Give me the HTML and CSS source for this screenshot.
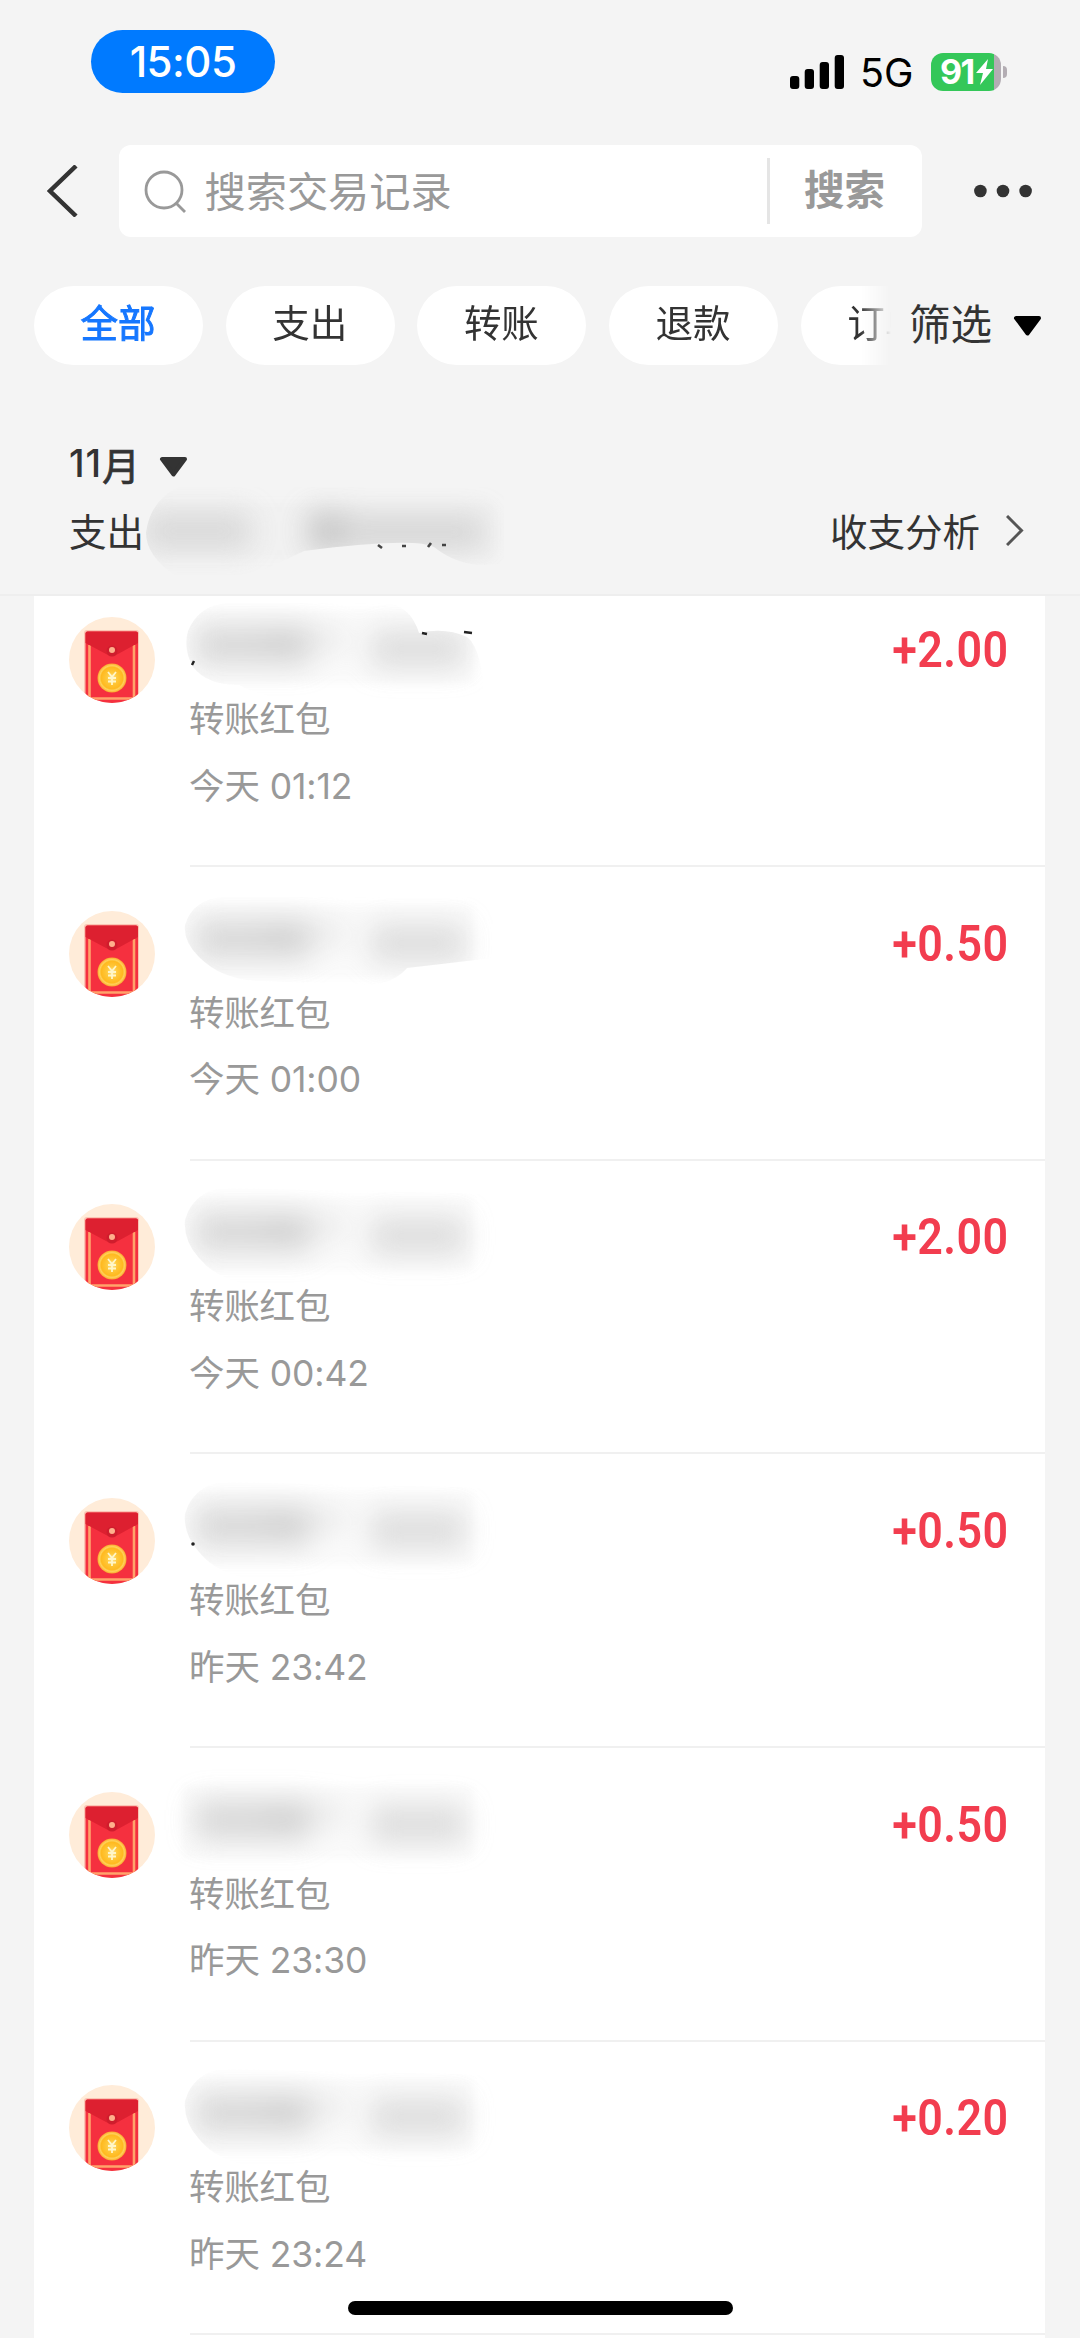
FILE: index.html
```html
<!DOCTYPE html>
<html lang="zh-CN">
<head>
<meta charset="utf-8">
<title>账单</title>
<link rel="stylesheet" href="styles.css">
</head>
<body>
<svg class="defs" width="0" height="0">
  <defs>
    <filter id="smear" x="-20%" y="-80%" width="140%" height="260%"><feGaussianBlur stdDeviation="14"/></filter>
    <filter id="soft" x="-20%" y="-60%" width="140%" height="220%"><feGaussianBlur stdDeviation="5"/></filter>
    <radialGradient id="coin"><stop offset="0" stop-color="#ffe9a0"/><stop offset=".35" stop-color="#ffc93c"/><stop offset=".75" stop-color="#ffb91f"/><stop offset=".85" stop-color="#ffd25a"/><stop offset="1" stop-color="#fba92c"/></radialGradient>
    <clipPath id="disc"><circle cx="43" cy="43" r="43"/></clipPath>
    <clipPath id="mask-a"><path d="M44 16L205 16Q228 20 236 46Q262 40 284 50Q300 62 302 120L150 118Q90 116 56 98Q24 98 10 80Q0 62 5 44Q16 18 44 16Z"/></clipPath>
    <clipPath id="mask-b"><path d="M40 16H310V77L224 87Q210 104 180 104L80 100Q40 100 16 76Q0 60 2 44Q10 18 40 16Z"/></clipPath>
    <clipPath id="mask-c"><path d="M40 14L320 20V112H70Q34 106 16 84Q0 66 2 46Q10 18 40 14Z"/></clipPath>
    <clipPath id="mask-total"><path d="M34 8H360V84Q320 92 290 68Q270 58 160 72L110 96H30Q2 76 2 54Q6 22 34 8Z"/></clipPath>
    <symbol id="packet" viewBox="0 0 86 86">
      <g clip-path="url(#disc)">
        <rect width="86" height="86" fill="#ffecd9"/>
        <rect x="15" y="13" width="55" height="76" rx="3" fill="#fbc5b4"/>
        <rect x="16.500" y="14.500" width="52.500" height="76" rx="2" fill="#f5303f"/>
        <path d="M20.500 28V80M65 28V80M20 81.500H66" stroke="#ffa36b" stroke-width="2.600" fill="none"/>
        <path d="M16.500 16.500q0-2 2-2H67q2 0 2 2V26L49 37q-6 4-12 0L16.500 26Z" fill="#dd2030"/>
        <circle cx="43" cy="34" r="5.500" fill="#cf1d2d"/>
        <circle cx="43" cy="33" r="3" fill="#ffb08c"/>
        <circle cx="43" cy="61" r="14.500" fill="url(#coin)"/>
        <path d="M39 55l4 5 4-5M43 60v8M39 61h8M39 64.500h8" stroke="#fff6c9" stroke-width="1.800" fill="none"/>
      </g>
    </symbol>
    <symbol id="caret" viewBox="0 0 29 20"><path d="M3 2H26L14.500 17.500Z" stroke-width="4" stroke-linejoin="round" stroke="currentColor" fill="currentColor"/></symbol>
    <g id="smudge">
      <rect x="0" y="24" width="290" height="72" fill="#fafafa" filter="url(#soft)"/>
      <g filter="url(#smear)" opacity=".75"><rect x="12" y="38" width="116" height="40" fill="#cfcfcf"/><rect x="80" y="44" width="40" height="22" fill="#c4c4c4"/><rect x="128" y="42" width="34" height="20" fill="#e2e2e2"/><rect x="188" y="43" width="94" height="38" fill="#d5d5d5"/></g>
    </g>
  </defs>
</svg>

<header class="status">
  <span class="clock">15:05</span>
  <div class="indicators">
    <svg class="signal" viewBox="0 0 54 34"><rect y="21" width="9.300" height="13" rx="3"/><rect x="14.700" y="14" width="9.300" height="20" rx="3"/><rect x="29.700" y="7" width="9.300" height="27" rx="3"/><rect x="44.700" width="9.300" height="34" rx="3"/></svg>
    <span class="network">5G</span>
    <div class="battery"><span class="level">91</span><svg class="bolt" viewBox="0 0 17 26"><path d="M12 0L0 14H7L4 26L17 10H10Z" fill="#fff"/></svg></div>
    <span class="nub"></span>
  </div>
</header>

<nav class="topbar">
  <svg class="back" viewBox="0 0 31 52"><path d="M29 1L3 26L29 51" fill="none" stroke="#333" stroke-width="4.500"/></svg>
  <div class="search">
    <svg class="lens" viewBox="0 0 43 43"><circle cx="20" cy="20" r="18" /><path d="M32 33L41 42"/></svg>
    <span class="placeholder">搜索交易记录</span>
    <span class="submit">搜索</span>
  </div>
  <svg class="more" viewBox="0 0 58 14"><circle cx="6.400" cy="7" r="6.300"/><circle cx="29" cy="7" r="6.300"/><circle cx="51.600" cy="7" r="6.300"/></svg>
</nav>

<section class="tabs">
  <div class="chips">
    <span class="chip active">全部</span><span class="chip">支出</span><span class="chip">转账</span><span class="chip">退款</span><span class="chip">订单</span>
  </div>
  <div class="filter">筛选<svg class="caret"><use href="#caret"/></svg></div>
</section>

<section class="summary">
  <div class="month">11<span class="unit">月</span><svg class="caret"><use href="#caret"/></svg></div>
  <div class="totals">
    <span>支出</span>
    <svg class="hidden-total" viewBox="0 0 360 100">
      <g clip-path="url(#mask-total)">
        <rect x="-10" y="24" width="360" height="56" fill="#f1f1f1" filter="url(#soft)"/>
        <g filter="url(#smear)" opacity=".7"><rect x="0" y="34" width="106" height="36" fill="#cfcfcf"/><rect x="164" y="32" width="38" height="40" fill="#b8b8b8"/><rect x="200" y="36" width="140" height="34" fill="#cbcbcb"/></g>
      </g>
      <path d="M234 66l4 3M258 67h4M284 68l3-4M298 66h4" stroke="#444" stroke-width="2.600"/>
    </svg>
    <span class="analysis">收支分析</span>
    <svg class="chevron" viewBox="0 0 18 31"><path d="M1 1L15.500 15.500L1 30" fill="none" stroke="#555" stroke-width="3"/></svg>
  </div>
</section>

<main class="list">
  <article class="row"><svg class="avatar"><use href="#packet"/></svg><div class="detail"><svg class="name" viewBox="0 0 320 120"><g clip-path="url(#mask-a)"><use href="#smudge"/></g><path d="M9 78l2-4M239 46l5 1M281 45l8 1" stroke="#222" stroke-width="2.500"/></svg><p>转账红包</p><p class="time">今天 01:12</p></div><span class="amount">+2.00</span></article>
  <article class="row"><svg class="avatar"><use href="#packet"/></svg><div class="detail"><svg class="name" viewBox="0 0 320 120"><g clip-path="url(#mask-b)"><use href="#smudge"/></g></svg><p>转账红包</p><p class="time">今天 01:00</p></div><span class="amount">+0.50</span></article>
  <article class="row"><svg class="avatar"><use href="#packet"/></svg><div class="detail"><svg class="name" viewBox="0 0 320 120"><g clip-path="url(#mask-c)"><use href="#smudge"/></g></svg><p>转账红包</p><p class="time">今天 00:42</p></div><span class="amount">+2.00</span></article>
  <article class="row"><svg class="avatar"><use href="#packet"/></svg><div class="detail"><svg class="name" viewBox="0 0 320 120"><g clip-path="url(#mask-c)"><use href="#smudge"/></g><circle cx="10" cy="76" r="1.800" fill="#222"/></svg><p>转账红包</p><p class="time">昨天 23:42</p></div><span class="amount">+0.50</span></article>
  <article class="row"><svg class="avatar"><use href="#packet"/></svg><div class="detail"><svg class="name" viewBox="0 0 320 120"><use href="#smudge"/></svg><p>转账红包</p><p class="time">昨天 23:30</p></div><span class="amount">+0.50</span></article>
  <article class="row"><svg class="avatar"><use href="#packet"/></svg><div class="detail"><svg class="name" viewBox="0 0 320 120"><g clip-path="url(#mask-c)"><use href="#smudge"/></g></svg><p>转账红包</p><p class="time">昨天 23:24</p></div><span class="amount">+0.20</span></article>
</main>
<div class="home-indicator"></div>
</body>
</html>
```
FILE: styles.css
```css
* { box-sizing: border-box; }
body {
  margin: 0;
  width: 1080px;
  height: 2338px;
  overflow: hidden;
  position: relative;
  display: flex;
  flex-direction: column;
  background: #f4f4f4;
  color: #333;
  font-family: Inter, "Noto Sans CJK SC", sans-serif;
}
svg { display: block; flex: none; }
.defs { position: absolute; }

.status { height: 145px; flex: none; padding: 30px 73px 0 91px; display: flex; justify-content: space-between; align-items: flex-start; }
.clock { width: 184px; height: 63px; border-radius: 31.5px; background: #007aff; color: #fff; font-size: 42px; line-height: 64px; font-weight: 500; text-align: center; letter-spacing: -0.5px; }
.indicators { display: flex; align-items: center; height: 38px; margin-top: 23px; }
.signal { width: 54px; height: 34px; }
.network { width: 87px; padding-left: 16px; color: #000; font-size: 39.5px; line-height: 38px; padding-top: 2px; }
.battery { width: 70px; height: 38px; border-radius: 12px; background: linear-gradient(to right, #34c759 63px, #b3adb3 63px); display: flex; align-items: center; gap: 2px; padding-left: 9px; color: #fff; }
.level { width: 34px; font-size: 34px; line-height: 38px; font-weight: 700; letter-spacing: -1.5px; }
.bolt { width: 17px; height: 26px; }
.nub { width: 4px; height: 12px; margin-left: 2px; border-radius: 0 6px 6px 0; background: #b3adb3; }

.topbar { height: 92px; flex: none; display: flex; align-items: center; padding-left: 47px; }
.back { width: 31px; height: 52px; }
.search { width: 803px; height: 92px; margin-left: 40.5px; border-radius: 12px; background: #fff; display: flex; align-items: center; color: #999; }
.lens { width: 43px; height: 43px; margin: 0 18px 0 25px; fill: none; stroke: #999; stroke-width: 2.8px; }
.placeholder { flex: 1; font-size: 41.2px; line-height: 60px; padding-top: 2px; }
.submit { width: 154.5px; height: 66px; border-left: 3px solid #e5e5e5; padding-left: 34px; font-size: 40.5px; line-height: 65px; font-weight: 700; }
.more { width: 58px; height: 14px; margin-left: 52.5px; fill: #333; }

.tabs { height: 79px; flex: none; margin-top: 49px; display: flex; align-items: center; padding-left: 34px; }
.chips { width: 857px; display: flex; gap: 22.7px; overflow: hidden; -webkit-mask-image: linear-gradient(to right, #000 826px, transparent 857px); mask-image: linear-gradient(to right, #000 826px, transparent 857px); }
.chip { flex: none; width: 169px; height: 79px; border-radius: 39.5px; background: #fff; padding-right: 1px; text-align: center; font-size: 37.5px; line-height: 75px; }
.active { color: #1677ff; -webkit-text-stroke: 1px #1677ff; }
.filter { display: flex; align-items: center; margin-left: 18px; font-size: 41.5px; line-height: 79px; }
.filter .caret { margin-left: 21px; color: #000; }
.caret { width: 29px; height: 20px; }

.summary { height: 231px; flex: none; padding: 70px 56px 0 69px; border-bottom: 2px solid #eee; }
.month { display: flex; align-items: center; height: 56px; font-size: 37.5px; font-weight: 500; letter-spacing: 1px; }
.unit { -webkit-text-stroke: 0.8px #333; font-weight: 400; }
.month .caret { margin: 7px 0 0 18px; }
.totals { display: flex; align-items: center; height: 76px; font-size: 37.5px; }
.hidden-total { width: 360px; height: 100px; }
.analysis { margin-left: auto; }
.chevron { width: 18px; height: 31px; margin: 3px 0 0 26px; }

.list { width: 1011px; margin-left: 34px; background: #fff; height: 1742px; flex: none; }
.row { height: 293.7px; padding: 43.7px 36px 0 35px; display: flex; position: relative; }
.row:first-child { height: 271px; padding-top: 21px; }
.row::after { content: ""; position: absolute; left: 156px; right: 0; bottom: 0; height: 2px; background: #f0f0f0; }
.avatar { width: 86px; height: 86px; }
.detail { margin-left: 34px; color: #999; font-size: 35.5px; line-height: 66.5px; letter-spacing: -0.2px; }
.detail p { margin: 0; }
.detail .time { letter-spacing: -0.1px; }
.name { width: 320px; height: 120px; margin: -30px 0 -20px -6px; overflow: visible; }
.amount { margin: 0 0 0 auto; color: #f23d4f; font: 600 49.5px/66px Roboto, sans-serif; letter-spacing: 0.5px; transform: scaleX(0.905); transform-origin: right; }
.home-indicator { position: absolute; left: 348px; top: 2301px; width: 385px; height: 14px; border-radius: 7px; background: #000; }
```
